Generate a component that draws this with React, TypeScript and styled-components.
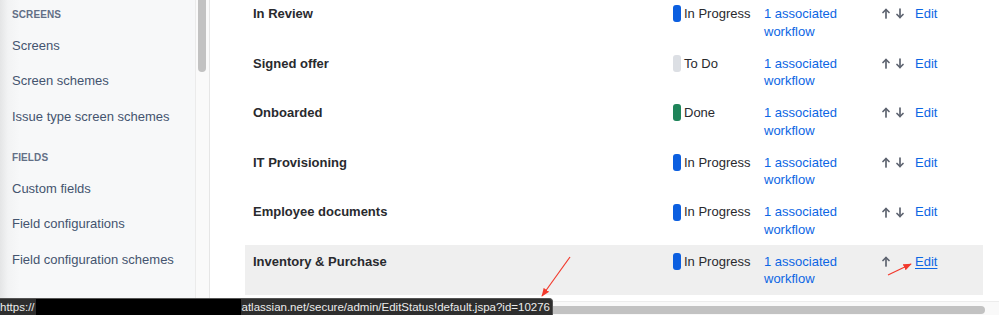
import { createGlobalStyle } from "styled-components"
import styled from "styled-components"

const GlobalStyle = createGlobalStyle`
  html, body {
    margin: 0;
    padding: 0;
    background: #ffffff;
  }
  body {
    font-family: "Liberation Sans", Arial, sans-serif;
  }
`

const Frame = styled.div`
  position: relative;
  display: flex;
  width: 999px;
  height: 315px;
  overflow: hidden;
  background: #ffffff;
`

const Sidebar = styled.nav`
  flex: none;
  width: 195px;
  box-sizing: border-box;
  padding: 7px 0 0 12px;
  background: linear-gradient(to right, #e4e5e6 0, #f2f3f4 8px, #f7f8f9 20px);
`

const Section = styled.div`
  & + & {
    margin-top: 16px;
  }
`

const SectionTitle = styled.div`
  font-size: 10px;
  line-height: 16px;
  font-weight: 700;
  letter-spacing: 0.1px;
  text-transform: uppercase;
  color: #626f86;
  margin-bottom: 5px;
`

const NavItem = styled.div`
  display: flex;
  align-items: center;
  height: 35.3px;
  font-size: 13px;
  color: #44546f;
`

const SideScroll = styled.div`
  flex: none;
  width: 15px;
  box-sizing: border-box;
  padding: 0 3px 0 2px;
  background: #fafafa;
  border-left: 1px solid #ebebeb;
  border-right: 1px solid #e6e6e6;
`

const SideThumb = styled.div`
  width: 8px;
  height: 78px;
  margin-top: -6px;
  border-radius: 4px;
  background: #c2c2c2;
`

const Main = styled.main`
  flex: 1;
  display: flex;
  flex-direction: column;
  min-width: 0;
`

const Table = styled.div`
  flex: 1;
  margin-top: -3px;
  padding: 0 16px 0 35px;
`

const Row = styled.div<{ $active?: boolean }>`
  display: grid;
  grid-template-columns: 420px 91px 118px 33px auto;
  align-items: start;
  height: 49.6px;
  box-sizing: border-box;
  padding: 8px 0 0 8px;
  font-size: 13px;
  line-height: 17.5px;
  background: ${(p) => (p.$active ? "#efefef" : "transparent")};
`

const Name = styled.div`
  font-weight: 700;
  color: #292a2e;
`

const Status = styled.div`
  display: flex;
  align-items: center;
  gap: 3px;
  color: #292a2e;
  white-space: nowrap;
`

const Lozenge = styled.span<{ $color: string }>`
  display: inline-block;
  width: 8px;
  height: 17px;
  border-radius: 3px;
  background: ${(p) => p.$color};
`

const Link = styled.a<{ $underline?: boolean }>`
  color: #0c66e4;
  text-decoration: ${(p) => (p.$underline ? "underline" : "none")};
  text-underline-offset: 2px;
  cursor: pointer;
`

const Workflow = styled(Link)`
  display: block;
  width: 80px;
`

const Moves = styled.div`
  display: flex;
  gap: 6px;
  height: 17.5px;
  align-items: center;
`

const ArrowSlot = styled.span`
  display: inline-flex;
  width: 8px;
  height: 11px;
`

const HScroll = styled.div`
  flex: none;
  height: 14px;
  margin-top: 6px;
  box-sizing: border-box;
  padding: 4px 14px 0 0;
  background: #f9f9f9;
  border-top: 1px solid #ececec;
`

const HThumb = styled.div`
  height: 8px;
  border-radius: 4px;
  background: #c2c2c2;
`

const StatusBar = styled.div`
  position: absolute;
  left: 0;
  bottom: 0;
  display: flex;
  align-items: center;
  width: 553px;
  height: 17px;
  box-sizing: border-box;
  background: #2e2e2e;
  border-top: 1px solid #555;
  border-right: 1px solid #555;
  border-top-right-radius: 4px;
  font-size: 11.5px;
  color: #ececec;
  white-space: nowrap;
  overflow: hidden;
`

const Redacted = styled.span`
  flex: none;
  display: inline-block;
  width: 205px;
  height: 100%;
  margin: 0 1px 0 1px;
  background: #000000;
`

const Notes = styled.svg`
  position: absolute;
  inset: 0;
  pointer-events: none;
`

type RowData = {
  name: string
  status: string
  color: string
  down: boolean
  active?: boolean
}

const rows: RowData[] = [
  { name: "In Review", status: "In Progress", color: "#0c5fe0", down: true },
  { name: "Signed offer", status: "To Do", color: "#dcdfe4", down: true },
  { name: "Onboarded", status: "Done", color: "#1f845a", down: true },
  { name: "IT Provisioning", status: "In Progress", color: "#0c5fe0", down: true },
  { name: "Employee documents", status: "In Progress", color: "#0c5fe0", down: true },
  { name: "Inventory & Purchase", status: "In Progress", color: "#0c5fe0", down: false, active: true },
]

const MoveArrow = ({ down }: { down?: boolean }) => (
  <svg width="8" height="11" viewBox="0 0 8 11">
    <g
      fill="none"
      stroke="#5e6470"
      strokeWidth="1.7"
      strokeLinecap="round"
      strokeLinejoin="round"
      transform={down ? "rotate(180 4 5.5)" : undefined}
    >
      <path d="M4 10V1.5" />
      <path d="M1 4.5L4 1.5L7 4.5" />
    </g>
  </svg>
)

export default function App() {
  return (
    <>
      <GlobalStyle />
      <Frame>
        <Sidebar>
          <Section>
            <SectionTitle>Screens</SectionTitle>
            <NavItem>Screens</NavItem>
            <NavItem>Screen schemes</NavItem>
            <NavItem>Issue type screen schemes</NavItem>
          </Section>
          <Section>
            <SectionTitle>Fields</SectionTitle>
            <NavItem>Custom fields</NavItem>
            <NavItem>Field configurations</NavItem>
            <NavItem>Field configuration schemes</NavItem>
          </Section>
        </Sidebar>
        <SideScroll>
          <SideThumb />
        </SideScroll>
        <Main>
          <Table>
            {rows.map((r) => (
              <Row key={r.name} $active={r.active}>
                <Name>{r.name}</Name>
                <Status>
                  <Lozenge $color={r.color} />
                  {r.status}
                </Status>
                <Workflow>1 associated workflow</Workflow>
                <Moves>
                  <ArrowSlot>
                    <MoveArrow />
                  </ArrowSlot>
                  <ArrowSlot>{r.down && <MoveArrow down />}</ArrowSlot>
                </Moves>
                <Link $underline={r.active}>Edit</Link>
              </Row>
            ))}
          </Table>
          <HScroll>
            <HThumb />
          </HScroll>
        </Main>
        <StatusBar>
          https://
          <Redacted />
          atlassian.net/secure/admin/EditStatus!default.jspa?id=10276
        </StatusBar>
        <Notes width="999" height="315" viewBox="0 0 999 315">
          <defs>
            <marker id="head" viewBox="0 0 10 10" refX="9" refY="5" markerWidth="7" markerHeight="7" orient="auto">
              <path d="M0 1L10 5L0 9Z" fill="#f2392c" />
            </marker>
          </defs>
          <line x1="570" y1="257" x2="542" y2="296" stroke="#f2392c" strokeWidth="1.2" markerEnd="url(#head)" />
          <line x1="888" y1="275" x2="911" y2="264" stroke="#f2392c" strokeWidth="1.2" markerEnd="url(#head)" />
        </Notes>
      </Frame>
    </>
  )
}
